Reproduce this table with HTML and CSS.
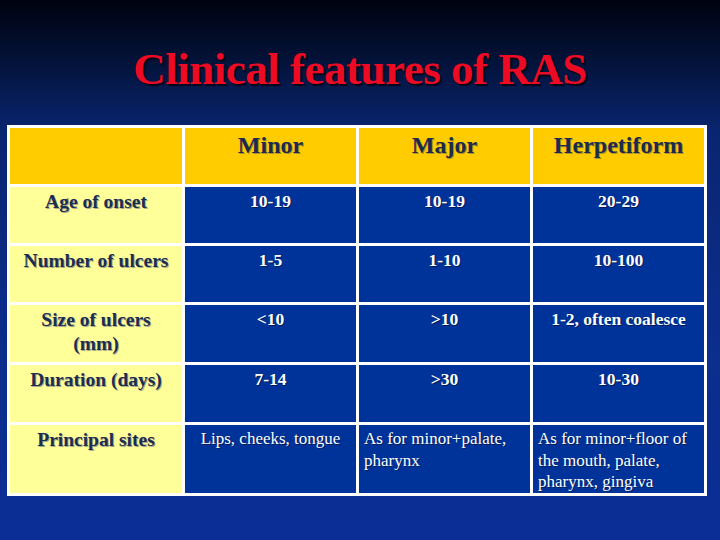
FILE: index.html
```html
<!DOCTYPE html>
<html>
<head>
<meta charset="utf-8">
<link rel="stylesheet" href="styles.css">
</head>
<body>
<div class="slide">
  <h1 class="title">Clinical features of RAS</h1>
  <div class="table">
    <div class="cell head"></div>
    <div class="cell head">Minor</div>
    <div class="cell head">Major</div>
    <div class="cell head">Herpetiform</div>

    <div class="cell label">Age of onset</div>
    <div class="cell data">10-19</div>
    <div class="cell data">10-19</div>
    <div class="cell data">20-29</div>

    <div class="cell label">Number of ulcers</div>
    <div class="cell data">1-5</div>
    <div class="cell data">1-10</div>
    <div class="cell data">10-100</div>

    <div class="cell label">Size of ulcers<br>(mm)</div>
    <div class="cell data">&lt;10</div>
    <div class="cell data">&gt;10</div>
    <div class="cell data">1-2, often coalesce</div>

    <div class="cell label">Duration (days)</div>
    <div class="cell data">7-14</div>
    <div class="cell data">&gt;30</div>
    <div class="cell data">10-30</div>

    <div class="cell label">Principal sites</div>
    <div class="cell data plain">Lips, cheeks, tongue</div>
    <div class="cell data plain left">As for minor+palate, pharynx</div>
    <div class="cell data plain left">As for minor+floor of the mouth, palate, pharynx, gingiva</div>
  </div>
</div>
</body>
</html>
```
FILE: styles.css
```css
html, body {
  margin: 0;
  padding: 0;
}
body {
  width: 720px;
  height: 540px;
  overflow: hidden;
  font-family: "Liberation Serif", "Times New Roman", serif;
}
.slide {
  width: 720px;
  height: 540px;
  background:
    radial-gradient(ellipse 260px 90px at 560px 360px, rgba(40, 80, 190, 0.25), rgba(0, 0, 0, 0) 70%),
    linear-gradient(to bottom, #00030f 0px, #031238 60px, #0a2570 130px, #0b2c88 300px, #0a2e96 540px);
  display: flex;
  flex-direction: column;
  align-items: center;
}
.title {
  margin: 43px 0 0 0;
  height: 82px;
  font-size: 45px;
  line-height: 52px;
  font-weight: bold;
  letter-spacing: -0.5px;
  color: #ec0a24;
  text-shadow: 2px 2px 1px #020818;
}
.table {
  align-self: flex-start;
  margin-left: 7px;
  background: #ffffff;
  padding: 3px;
  display: grid;
  grid-template-columns: 172px 171px 171px 171px;
  grid-template-rows: 56px 56px 56px 57px 57px 68px;
  gap: 3px;
}
.cell {
  padding: 2px 4px 0 4px;
  text-align: center;
  box-sizing: border-box;
}
.head {
  background: #ffcc00;
  color: #1c2a4e;
  font-weight: bold;
  font-size: 24px;
  line-height: 28px;
  padding-top: 3px;
  text-shadow: 1px 1px 0 rgba(140, 120, 60, 0.7);
}
.label {
  background: #ffff99;
  color: #1c2d52;
  font-weight: bold;
  font-size: 19.5px;
  line-height: 24px;
  padding-top: 3px;
  text-shadow: 1px 1px 0 rgba(150, 150, 130, 0.8);
}
.data {
  background: #003399;
  color: #ffffff;
  font-weight: bold;
  font-size: 17.5px;
  line-height: 21px;
  padding-top: 4px;
  text-shadow: 1px 1px 0 #001c5c;
}
.plain {
  font-weight: normal;
  font-size: 17px;
  line-height: 21.5px;
  padding-top: 3px;
}
.left {
  text-align: left;
  padding-left: 5px;
}
```
